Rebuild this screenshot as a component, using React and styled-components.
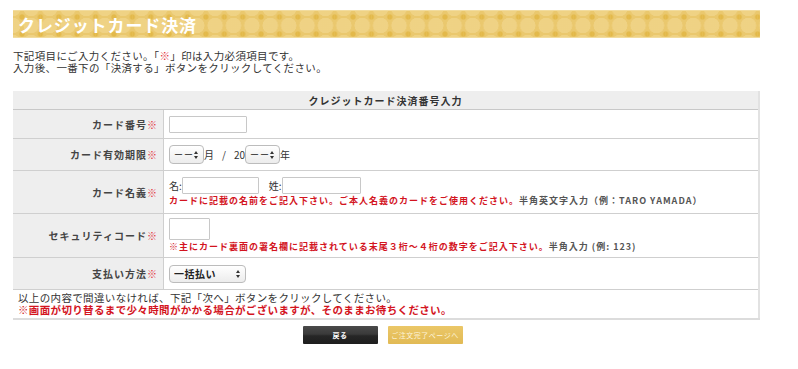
import React from 'react'
import styled, { createGlobalStyle } from 'styled-components'

const Global = createGlobalStyle`
  html, body {
    margin: 0;
    padding: 0;
    background: #fff;
  }
  body {
    font-family: "Noto Sans CJK JP", "Noto Sans", sans-serif;
    color: #333;
  }
`

const Page = styled.div`
  width: 798px;
  padding: 10px 38px 0 13px;
  box-sizing: border-box;
`

const TitleBar = styled.div`
  height: 26px;
  display: flex;
  align-items: center;
  padding-left: 5px;
  background-color: #eac86e;
  background-image:
    radial-gradient(circle at 0 0, #e3b94a 2px, transparent 3.2px),
    radial-gradient(circle at 100% 0, #e3b94a 2px, transparent 3.2px),
    radial-gradient(circle at 0 100%, #e3b94a 2px, transparent 3.2px),
    radial-gradient(circle at 100% 100%, #e3b94a 2px, transparent 3.2px),
    radial-gradient(circle at 50% 50%, rgba(255, 240, 200, 0.25) 7.5px, transparent 8px);
  background-size: 18.4px 17px;
  background-position: 9px 6px;
  border-top: 1px solid #f2dc9e;
  border-bottom: 1px solid #f2dc9e;
`

const Title = styled.h1`
  margin: 0;
  font-size: 17px;
  font-weight: 700;
  color: #fff;
  letter-spacing: 0.9px;
  line-height: 1;
`

const Intro = styled.p`
  margin: 12px 0 17px;
  font-size: 10.5px;
  line-height: 12px;
  letter-spacing: 0.35px;
  color: #333;
`

const Mark = styled.span`
  color: #e3303a;
  font-weight: ${p => (p.bold ? 700 : 400)};
`

const Table = styled.table`
  width: 747px;
  border-collapse: collapse;
  border-right: 2px solid #e2e2e2;
  border-bottom: 2px solid #dcdcdc;
  font-size: 10px;
  letter-spacing: 1px;
`

const Caption = styled.th`
  height: 18px;
  background: #eee;
  border-bottom: 1px solid #c8c8c8;
  text-align: center;
  font-weight: 700;
  font-size: 10px;
  color: #333;
  padding: 0;
`

const Row = styled.tr`
  height: ${p => p.h}px;
  border-bottom: 1px solid #cfcfcf;
`

const Label = styled.th`
  width: 145px;
  background: #eee;
  border-right: 1px solid #cfcfcf;
  text-align: right;
  padding: 0 5px 0 0;
  font-weight: 700;
  color: #444;
  vertical-align: middle;
`

const Value = styled.td`
  padding: 0 0 0 5px;
  vertical-align: middle;
  color: #333;
`

const Line = styled.div`
  display: flex;
  align-items: center;
`

const TextInput = styled.input`
  width: ${p => p.w}px;
  height: ${p => p.h || 17}px;
  box-sizing: border-box;
  border: 1px solid #c8c8c8;
  border-radius: 1px;
  padding: 0 3px;
  margin: 0;
  background: #fff;
  outline: none;
`

const SelectWrap = styled.span`
  position: relative;
  display: inline-flex;
  &::before, &::after {
    content: "";
    position: absolute;
    right: 6px;
    border-left: 2.5px solid transparent;
    border-right: 2.5px solid transparent;
    pointer-events: none;
  }
  &::before {
    top: 50%;
    margin-top: -4px;
    border-bottom: 3px solid #333;
  }
  &::after {
    top: 50%;
    margin-top: 1px;
    border-top: 3px solid #333;
  }
`

const Select = styled.select`
  appearance: none;
  -webkit-appearance: none;
  width: ${p => p.w}px;
  height: ${p => p.h || 19}px;
  box-sizing: border-box;
  border: 1px solid #bcbcbc;
  border-radius: 4px;
  background: linear-gradient(#fff, #ececec);
  padding: 0 10px 0 4px;
  margin: 0;
  font-family: "Noto Sans CJK JP", sans-serif;
  font-size: ${p => (p.bold ? 10 : 9)}px;
  font-weight: ${p => (p.bold ? 700 : 400)};
  letter-spacing: ${p => (p.bold ? 0.5 : 1)}px;
  color: #222;
  outline: none;
`

const Unit = styled.span`
  font-size: 10px;
  letter-spacing: 0;
  margin: 0 ${p => p.m || 0}px;
  margin-left: ${p => (p.ml != null ? p.ml : p.m || 0)}px;
  color: #333;
`

const Hint = styled.div`
  margin-top: ${p => p.mt || 2}px;
  font-size: 9px;
  letter-spacing: 1px;
  line-height: 12px;
  white-space: nowrap;
`

const Red = styled.span`
  color: #d3141e;
  font-weight: 700;
`

const Gray = styled.span`
  color: #555;
  font-weight: 700;
`

const NoteCell = styled.td`
  padding: 1px 0 0 5px;
  font-size: 10.5px;
  line-height: 12px;
  letter-spacing: 0.35px;
  color: #333;
  vertical-align: middle;
`

const Buttons = styled.div`
  display: flex;
  justify-content: center;
  gap: 10px;
  margin-top: 6px;
  padding-right: 8px;
`

const Button = styled.button`
  width: 75px;
  height: 18px;
  border: none;
  border-radius: 1px;
  padding: 0;
  font-family: "Noto Sans CJK JP", sans-serif;
  font-size: 7px;
  font-weight: ${p => (p.dark ? 700 : 400)};
  letter-spacing: 0.5px;
  color: ${p => (p.dark ? '#fff' : '#fdf3d8')};
  background: ${p =>
    p.dark
      ? 'linear-gradient(#4a4a4a 0%, #3a3a3a 45%, #262626 55%, #1e1e1e 100%)'
      : 'linear-gradient(#ebc768, #e2ba55)'};
  box-shadow: ${p => (p.dark ? '0 1px 0 #bbb' : '0 1px 0 #f0dca0')};
`

function App() {
  return (
    <Page>
      <Global />
      <TitleBar>
        <Title>クレジットカード決済</Title>
      </TitleBar>

      <Intro>
        下記項目にご入力ください。「<Mark bold>※</Mark>」印は入力必須項目です。
        <br />
        入力後、一番下の「決済する」ボタンをクリックしてください。
      </Intro>

      <Table>
        <thead>
          <tr>
            <Caption colSpan={2}>クレジットカード決済番号入力</Caption>
          </tr>
        </thead>
        <tbody>
          <Row h={29}>
            <Label>カード番号<Mark>※</Mark></Label>
            <Value>
              <TextInput w={78} />
            </Value>
          </Row>
          <Row h={32}>
            <Label>カード有効期限<Mark>※</Mark></Label>
            <Value>
              <Line>
                <SelectWrap>
                  <Select w={35}><option>ーー</option></Select>
                </SelectWrap>
                <Unit>月</Unit>
                <Unit m={8}>/</Unit>
                <Unit>20</Unit>
                <SelectWrap>
                  <Select w={35}><option>ーー</option></Select>
                </SelectWrap>
                <Unit>年</Unit>
              </Line>
            </Value>
          </Row>
          <Row h={43}>
            <Label>カード名義<Mark>※</Mark></Label>
            <Value>
              <Line>
                <Unit>名:</Unit>
                <TextInput w={77} />
                <Unit ml={10}>姓:</Unit>
                <TextInput w={79} />
              </Line>
              <Hint mt={1}>
                <Red>カードに記載の名前をご記入下さい。ご本人名義のカードをご使用ください。</Red>
                <Gray>半角英文字入力（例：TARO YAMADA）</Gray>
              </Hint>
            </Value>
          </Row>
          <Row h={44}>
            <Label>セキュリティコード<Mark>※</Mark></Label>
            <Value>
              <TextInput w={41} h={22} />
              <Hint mt={1}>
                <Red>※主にカード裏面の署名欄に記載されている末尾３桁～４桁の数字をご記入下さい。</Red>
                <Gray>半角入力 (例: 123)</Gray>
              </Hint>
            </Value>
          </Row>
          <Row h={32}>
            <Label>支払い方法<Mark>※</Mark></Label>
            <Value>
              <SelectWrap>
                <Select w={77} h={18} bold><option>一括払い</option></Select>
              </SelectWrap>
            </Value>
          </Row>
          <Row h={29}>
            <NoteCell colSpan={2}>
              以上の内容で間違いなければ、下記「次へ」ボタンをクリックしてください。
              <br />
              <Red>※画面が切り替るまで少々時間がかかる場合がございますが、そのままお待ちください。</Red>
            </NoteCell>
          </Row>
        </tbody>
      </Table>

      <Buttons>
        <Button dark>戻る</Button>
        <Button>ご注文完了ページへ</Button>
      </Buttons>
    </Page>
  )
}

export default App
